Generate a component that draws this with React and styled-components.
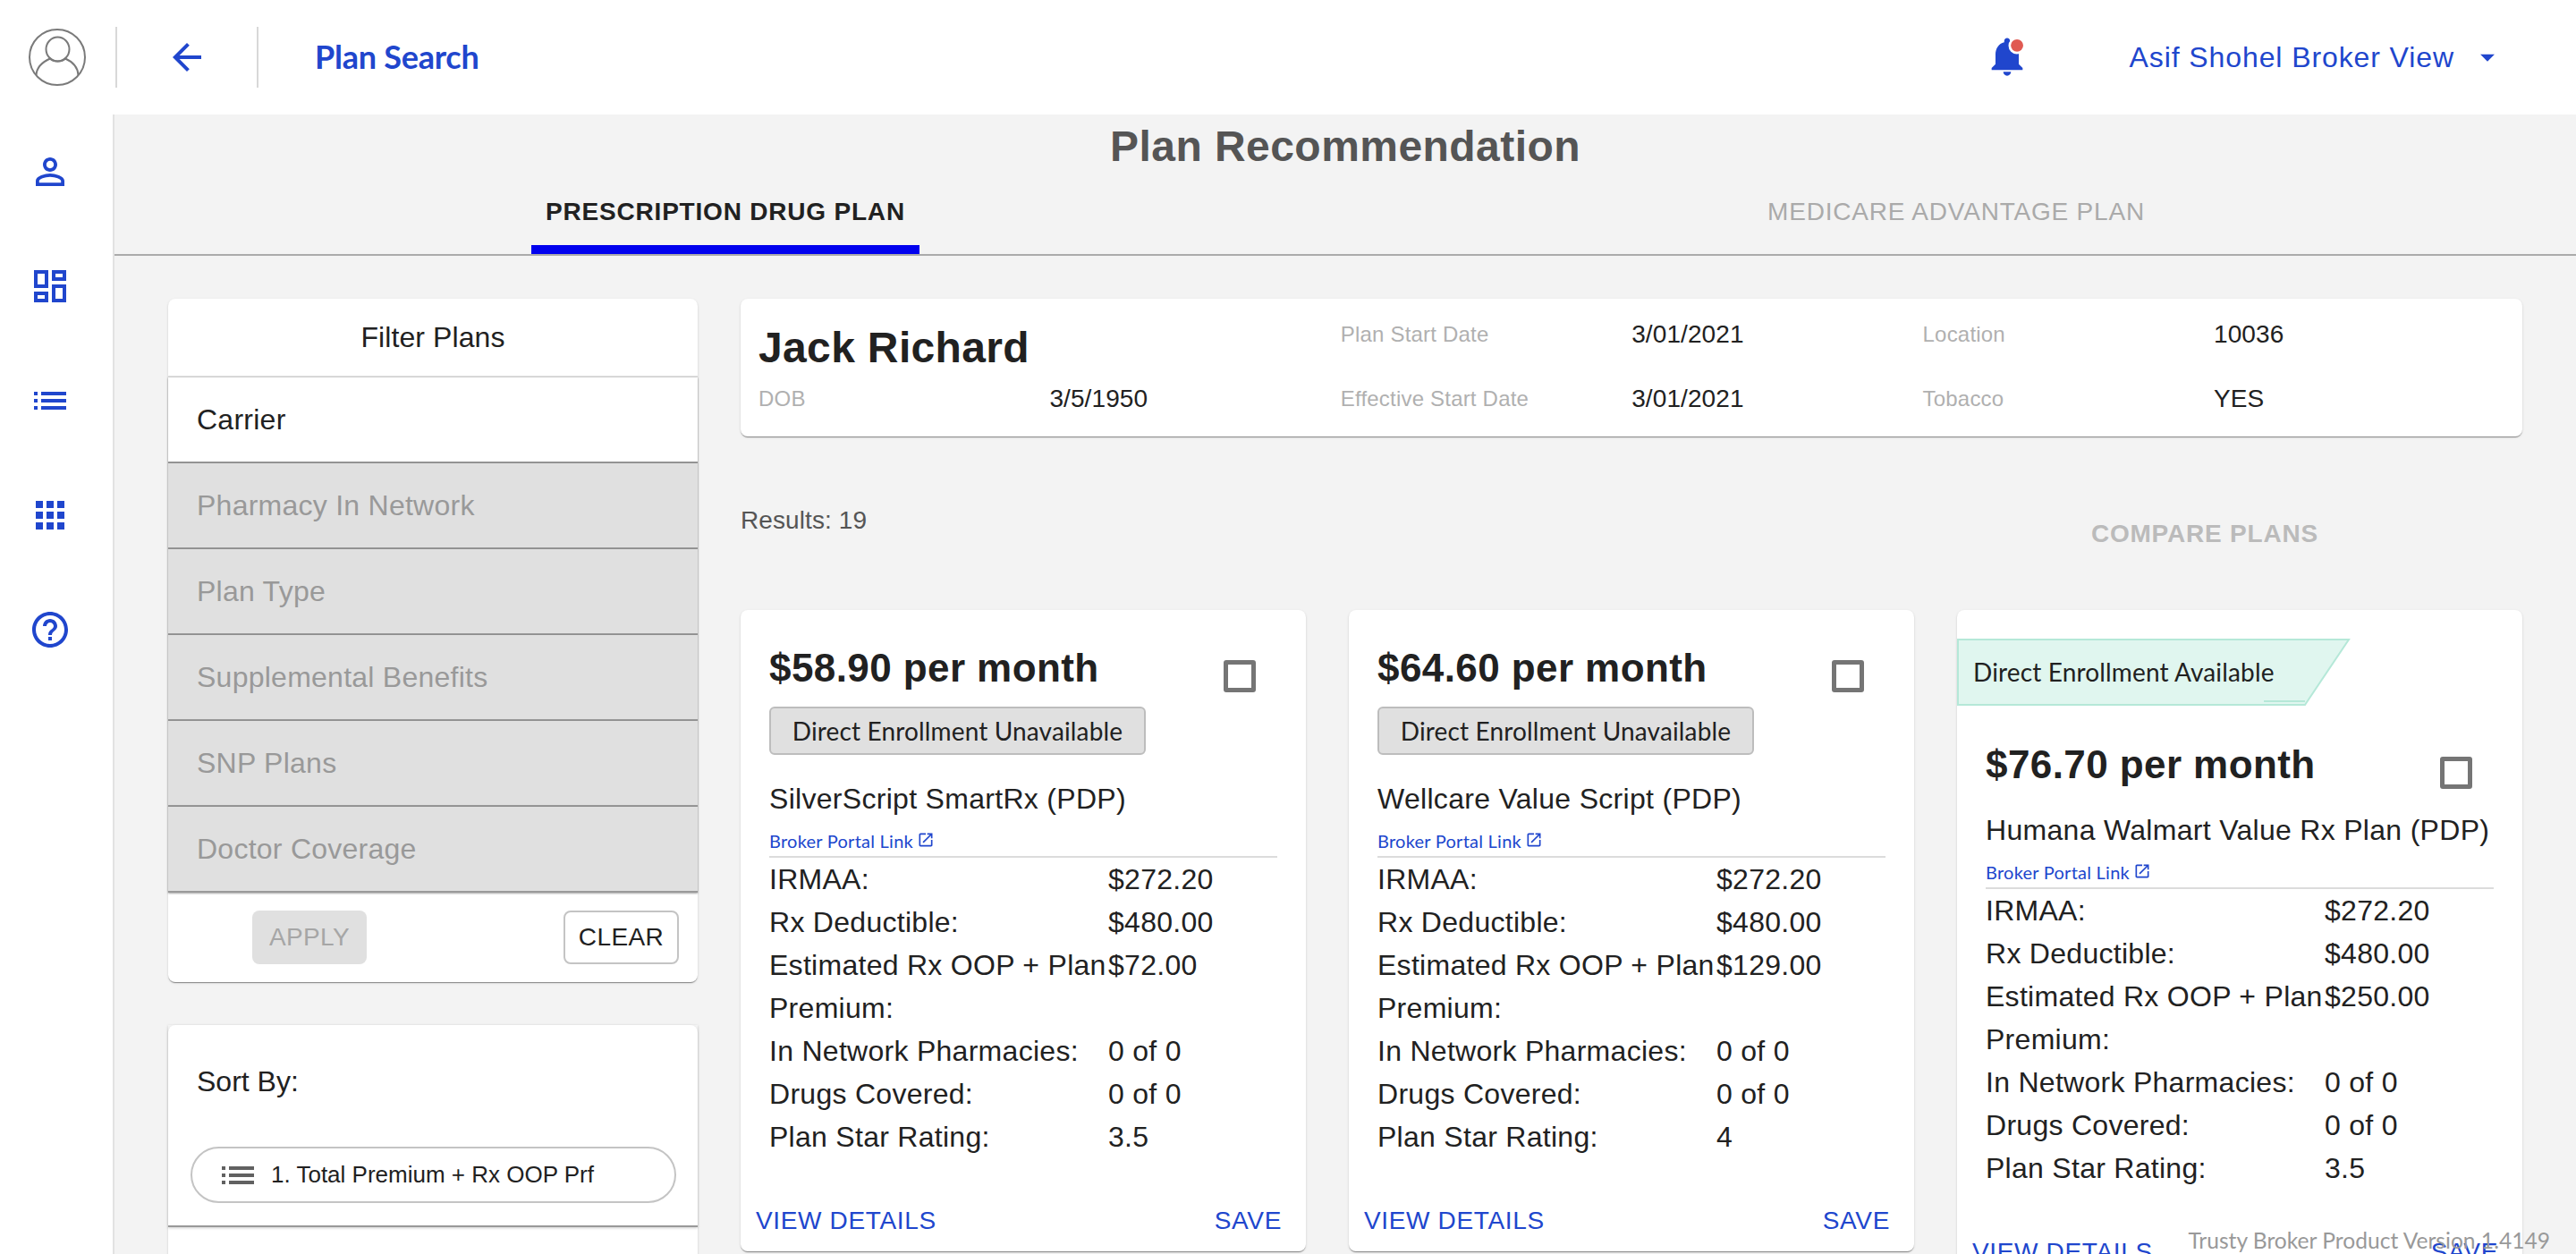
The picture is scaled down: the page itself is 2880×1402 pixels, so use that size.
import React from "react";
import styled, { createGlobalStyle } from "styled-components";

const BLUE = "#2046cd";
const SANS = `"Liberation Sans", Arial, sans-serif`;
const LATO = `Lato, "Liberation Sans", sans-serif`;

const Global = createGlobalStyle`
  html, body { margin: 0; padding: 0; height: 100%; overflow: hidden; background: #fff; }
  * { box-sizing: border-box; }
  #root { height: 100%; }
`;

const Page = styled.div`
  position: relative;
  height: 1402px;
  overflow: hidden;
  display: grid;
  grid-template-rows: 128px 1fr;
  grid-template-columns: 128px 1fr;
  font-family: ${SANS};
  color: #212121;
`;

const TopBar = styled.header`
  grid-column: 1 / 3;
  display: flex;
  align-items: center;
  background: #fff;
  padding-left: 32px;
`;

const Avatar = styled.svg`
  width: 64px;
  height: 64px;
  flex: none;
`;

const VRule = styled.div`
  width: 2px;
  height: 68px;
  background: #d8d8d8;
  flex: none;
  margin-left: ${(p) => p.$left}px;
`;

const BackIcon = styled.svg`
  width: 48px;
  height: 48px;
  margin-left: 54px;
  flex: none;
  fill: ${BLUE};
`;

const PageName = styled.div`
  font-family: ${LATO};
  font-weight: 700;
  font-size: 36px;
  line-height: 44px;
  margin-top: -3px;
  color: ${BLUE};
  margin-left: 63px;
  letter-spacing: -0.25px;
`;

const TopRight = styled.div`
  margin-left: auto;
  display: flex;
  align-items: center;
  padding-right: 80px;
`;

const Bell = styled.svg`
  width: 52px;
  height: 52px;
  flex: none;
  margin-right: 111px;
  margin-top: -2px;
`;

const UserName = styled.div`
  font-size: 32px;
  color: ${BLUE};
  letter-spacing: 0.9px;
  white-space: nowrap;
`;

const Caret = styled.svg`
  width: 38px;
  height: 38px;
  fill: ${BLUE};
  margin-left: 18px;
  flex: none;
`;

const Side = styled.nav`
  background: #fff;
  border-right: 2px solid #e2e2e2;
  display: flex;
  flex-direction: column;
  align-items: center;
  padding: 40px 14px 0 0;
  gap: 80px;
`;

const SideIcon = styled.svg`
  width: 48px;
  height: 48px;
  fill: ${BLUE};
  flex: none;
`;

const Main = styled.main`
  background: #f3f3f3;
  overflow: hidden;
  min-width: 0;
`;

const Heading = styled.div`
  border-bottom: 2px solid #aaa;
  height: 158px;
  display: flex;
  flex-direction: column;
`;

const Title = styled.h1`
  margin: 0;
  text-align: center;
  font-size: 48px;
  line-height: 56px;
  padding-top: 8px;
  font-weight: 700;
  color: #555;
  height: 62px;
  letter-spacing: 0.45px;
`;

const Tabs = styled.div`
  display: grid;
  grid-template-columns: 1366px 1fr;
  justify-items: center;
  flex: 1;
  align-items: end;
`;

const Tab = styled.div`
  width: 434px;
  height: 94px;
  padding-top: 26px;
  line-height: 42px;
  text-align: center;
  font-size: 28px;
  letter-spacing: 0.8px;
  white-space: nowrap;
  font-weight: ${(p) => (p.$active ? 700 : 400)};
  color: ${(p) => (p.$active ? "#212121" : "#aaa")};
  border-bottom: 10px solid ${(p) => (p.$active ? "#0000ee" : "transparent")};
`;

const Content = styled.div`
  display: grid;
  grid-template-columns: 592px 1992px;
  column-gap: 48px;
  padding: 48px 0 0 60px;
  align-items: start;
`;

const FilterColumn = styled.aside`
  display: flex;
  flex-direction: column;
  gap: 48px;
`;

const Panel = styled.section`
  background: #fff;
  border-radius: 8px;
  box-shadow: 0 2px 1px -1px rgba(0, 0, 0, 0.3), 0 1px 1px rgba(0, 0, 0, 0.14), 0 1px 3px rgba(0, 0, 0, 0.12);
`;

const FilterHead = styled.div`
  height: 88px;
  border-bottom: 2px solid #e0e0e0;
  text-align: center;
  line-height: 86px;
  font-size: 32px;
  letter-spacing: 0.1px;
`;

const FilterRow = styled.div`
  height: 96px;
  padding: 0 32px;
  line-height: 94px;
  font-size: 32px;
  letter-spacing: 0.25px;
  background: ${(p) => (p.$on ? "#fff" : "#e0e0e0")};
  color: ${(p) => (p.$on ? "#212121" : "#999")};
  border-bottom: 2px solid #9a9a9a;
  box-shadow: 0 1px 2px rgba(0, 0, 0, 0.3), 0 0 2px rgba(0, 0, 0, 0.15);
`;

const FilterActions = styled.div`
  display: flex;
  justify-content: space-between;
  padding: 20px 21px 20px 94px;
`;

const ApplyButton = styled.div`
  width: 128px;
  height: 60px;
  border-radius: 8px;
  background: #e0e0e0;
  color: #a6a6a6;
  font-size: 28px;
  line-height: 60px;
  text-align: center;
  letter-spacing: 0.4px;
`;

const ClearButton = styled.div`
  width: 129px;
  height: 60px;
  border-radius: 8px;
  border: 2px solid #c4c4c4;
  font-size: 28px;
  line-height: 56px;
  text-align: center;
  letter-spacing: 0.4px;
`;

const SortTop = styled.div`
  padding: 38px 24px 25px 25px;
  border-bottom: 2px solid #999;
  box-shadow: 0 1px 3px rgba(0, 0, 0, 0.2);
`;

const SortLabel = styled.div`
  font-size: 32px;
  line-height: 50px;
  padding-left: 7px;
`;

const SortPill = styled.div`
  margin-top: 48px;
  height: 63px;
  border: 2px solid #c4c4c4;
  border-radius: 32px;
  display: flex;
  align-items: center;
  padding-left: 27px;
  font-size: 26px;
  gap: 13px;
`;

const SortIcon = styled.svg`
  width: 48px;
  height: 48px;
  fill: #616161;
  flex: none;
`;

const SortRest = styled.div`
  height: 120px;
`;

const Results = styled.div`
  min-width: 0;
`;

const PersonCard = styled(Panel)`
  display: grid;
  grid-template-columns: repeat(6, 325.4px);
  grid-auto-rows: 72px;
  padding: 4px 20px 6px;
  height: 154px;
`;

const PersonName = styled.div`
  grid-column: span 2;
  font-size: 48px;
  font-weight: 700;
  line-height: 42px;
  padding-top: 30px;
  letter-spacing: 0.35px;
`;

const InfoLabel = styled.div`
  font-size: 24px;
  line-height: 72px;
  color: #b0b0b0;
  letter-spacing: 0.2px;
`;

const InfoValue = styled.div`
  font-size: 28px;
  line-height: 72px;
  letter-spacing: 0.1px;
`;

const ToolRow = styled.div`
  height: 194px;
  display: flex;
  justify-content: space-between;
  align-items: flex-start;
`;

const ResultCount = styled.div`
  font-size: 28px;
  line-height: 40px;
  margin-top: 74px;
  color: #555;
  letter-spacing: 0.1px;
`;

const CompareLink = styled.div`
  font-size: 28px;
  line-height: 40px;
  margin-top: 89px;
  margin-right: 228px;
  font-weight: 700;
  color: #bbb;
  letter-spacing: 0.8px;
`;

const CardRow = styled.div`
  display: grid;
  grid-template-columns: repeat(3, 632px);
  gap: 48px;
  align-items: start;
`;

const Card = styled(Panel)`
  display: flex;
  flex-direction: column;
  padding-top: ${(p) => (p.$ribbon ? 32 : 36)}px;
`;

const Ribbon = styled.svg`
  display: block;
  width: 440px;
  height: 75px;
  margin-bottom: 37px;
`;

const RibbonWrap = styled.div`
  position: relative;
`;

const RibbonText = styled.span`
  position: absolute;
  left: 18px;
  top: 0;
  line-height: 75px;
  font-family: ${LATO};
  font-size: 28px;
  letter-spacing: 0.15px;
  color: #212121;
`;

const CardBody = styled.div`
  padding: 0 32px;
`;

const PriceRow = styled.div`
  display: flex;
  justify-content: space-between;
  align-items: flex-start;
`;

const Price = styled.div`
  font-size: 44px;
  line-height: 58px;
  font-weight: 700;
  white-space: nowrap;
  letter-spacing: 0.42px;
`;

const Check = styled.div`
  width: 36px;
  height: 36px;
  border: 5px solid #757575;
  border-radius: 3px;
  margin: 20px 24px 0 0;
  flex: none;
`;

const UnavailableBadge = styled.div`
  display: inline-block;
  margin-top: 14px;
  width: 421px;
  height: 54px;
  line-height: 50px;
  text-align: center;
  background: #e0e0e0;
  border: 2px solid #bdbdbd;
  border-radius: 6px;
  font-family: ${LATO};
  font-size: 28px;
  letter-spacing: 0.15px;
`;

const PlanName = styled.div`
  margin-top: ${(p) => (p.$tight ? 20 : 25)}px;
  font-size: 32px;
  line-height: 48px;
  letter-spacing: 0.3px;
  white-space: nowrap;
`;

const PortalLink = styled.div`
  margin-top: 6px;
  height: 36px;
  border-bottom: 2px solid #dcdcdc;
  display: flex;
  align-items: flex-start;
  font-family: ${LATO};
  font-size: 20px;
  line-height: 34px;
  letter-spacing: 0.25px;
  color: ${BLUE};
  gap: 4px;
`;

const LinkIcon = styled.svg`
  width: 20px;
  height: 20px;
  fill: ${BLUE};
  margin-top: 6px;
`;

const Facts = styled.dl`
  margin: 0;
  display: grid;
  grid-template-columns: 379px 1fr;
  font-size: 32px;
  line-height: 48px;
  letter-spacing: 0.28px;
`;

const FactLabel = styled.dt`
  margin: 0;
`;

const FactValue = styled.dd`
  margin: 0;
`;

const CardActions = styled.div`
  display: flex;
  justify-content: space-between;
  margin-top: 46px;
  padding: 0 27px 10px 17px;
`;

const ActionLink = styled.div`
  font-size: 28px;
  line-height: 48px;
  color: ${BLUE};
  letter-spacing: 0.65px;
`;

const Version = styled.div`
  position: absolute;
  right: 29px;
  bottom: 1px;
  line-height: 28px;
  font-family: ${LATO};
  font-size: 24.6px;
  color: #999;
  white-space: nowrap;
`;

const P = {
  person: "M12 5.9c1.16 0 2.1.94 2.1 2.1s-.94 2.1-2.1 2.1S9.9 9.16 9.9 8s.94-2.1 2.1-2.1m0 9c2.97 0 6.1 1.46 6.1 2.1v1.1H5.9V17c0-.64 3.13-2.1 6.1-2.1M12 4C9.79 4 8 5.79 8 8s1.79 4 4 4 4-1.79 4-4-1.79-4-4-4zm0 9c-2.67 0-8 1.34-8 4v3h16v-3c0-2.66-5.33-4-8-4z",
  dash: "M19 5v2h-4V5h4M9 5v6H5V5h4m10 8v6h-4v-6h4M9 17v2H5v-2h4M21 3h-8v6h8V3zM11 3H3v10h8V3zm10 8h-8v10h8V11zm-10 4H3v6h8v-6z",
  list: "M3 13h2v-2H3v2zm0 4h2v-2H3v2zm0-8h2V7H3v2zm4 4h14v-2H7v2zm0 4h14v-2H7v2zM7 7v2h14V7H7z",
  apps: "M4 8h4V4H4v4zm6 12h4v-4h-4v4zm-6 0h4v-4H4v4zm0-6h4v-4H4v4zm6 0h4v-4h-4v4zm6-10v4h4V4h-4zm-6 4h4V4h-4v4zm6 6h4v-4h-4v4zm0 6h4v-4h-4v4z",
  help: "M11 18h2v-2h-2v2zm1-16C6.48 2 2 6.48 2 12s4.48 10 10 10 10-4.48 10-10S17.52 2 12 2zm0 18c-4.41 0-8-3.59-8-8s3.59-8 8-8 8 3.59 8 8-3.59 8-8 8zm0-14c-2.21 0-4 1.79-4 4h2c0-1.1.9-2 2-2s2 .9 2 2c0 2-3 1.75-3 5h2c0-2.25 3-2.5 3-5 0-2.21-1.79-4-4-4z",
  back: "M20 11H7.83l5.59-5.59L12 4l-8 8 8 8 1.41-1.41L7.83 13H20v-2z",
  bell: "M12 22c1.1 0 2-.9 2-2h-4c0 1.1.89 2 2 2zm6-6v-5c0-3.07-1.64-5.64-4.5-6.32V4c0-.83-.67-1.5-1.5-1.5s-1.5.67-1.5 1.5v.68C7.63 5.36 6 7.92 6 11v5l-2 2v1h16v-1l-2-2z",
  drop: "M7 10l5 5 5-5z",
  open: "M19 19H5V5h7V3H5c-1.11 0-2 .9-2 2v14c0 1.1.89 2 2 2h14c1.1 0 2-.9 2-2v-7h-2v7zM14 3v2h3.59l-9.83 9.83 1.41 1.41L19 6.41V10h2V3h-7z",
};

const plans = [
  { price: "$58.90 per month", name: "SilverScript SmartRx (PDP)", oop: "$72.00", star: "3.5" },
  { price: "$64.60 per month", name: "Wellcare Value Script (PDP)", oop: "$129.00", star: "4" },
  { price: "$76.70 per month", name: "Humana Walmart Value Rx Plan (PDP)", oop: "$250.00", star: "3.5", direct: true },
];

const filters = ["Pharmacy In Network", "Plan Type", "Supplemental Benefits", "SNP Plans", "Doctor Coverage"];

function PlanCard({ plan }) {
  const facts = [
    ["IRMAA:", "$272.20"],
    ["Rx Deductible:", "$480.00"],
    ["Estimated Rx OOP + Plan Premium:", plan.oop],
    ["In Network Pharmacies:", "0 of 0"],
    ["Drugs Covered:", "0 of 0"],
    ["Plan Star Rating:", plan.star],
  ];
  return (
    <Card $ribbon={plan.direct}>
      {plan.direct && (
        <RibbonWrap>
          <Ribbon viewBox="0 0 440 75">
            <path d="M1 1H438L389 74H1Z" fill="#e0f6ef" stroke="#b5e8d8" strokeWidth="2" />
            <path d="M343 70H389" fill="none" stroke="#b5e8d8" strokeWidth="2" />
          </Ribbon>
          <RibbonText>Direct Enrollment Available</RibbonText>
        </RibbonWrap>
      )}
      <CardBody>
        <PriceRow>
          <Price>{plan.price}</Price>
          <Check />
        </PriceRow>
        {!plan.direct && <UnavailableBadge>Direct Enrollment Unavailable</UnavailableBadge>}
        <PlanName $tight={plan.direct}>{plan.name}</PlanName>
        <PortalLink>
          Broker Portal Link
          <LinkIcon viewBox="0 0 24 24"><path d={P.open} /></LinkIcon>
        </PortalLink>
        <Facts>
          {facts.map(([k, v]) => (
            <React.Fragment key={k}>
              <FactLabel>{k}</FactLabel>
              <FactValue>{v}</FactValue>
            </React.Fragment>
          ))}
        </Facts>
      </CardBody>
      <CardActions>
        <ActionLink>VIEW DETAILS</ActionLink>
        <ActionLink>SAVE</ActionLink>
      </CardActions>
    </Card>
  );
}

export default function App() {
  return (
    <>
      <Global />
      <Page>
        <TopBar>
          <Avatar viewBox="0 0 64 64" fill="none" stroke="#7a7a7a" strokeWidth="2">
            <circle cx="32" cy="32" r="31" />
            <ellipse cx="32.5" cy="23" rx="13" ry="13.5" />
            <path d="M8.5 52C9 43 16 37 24 33.5C28 37.5 37 37.5 41 33.5C49 37 55 43 55.5 52" />
          </Avatar>
          <VRule $left={33} />
          <BackIcon viewBox="0 0 24 24"><path d={P.back} /></BackIcon>
          <VRule $left={54} />
          <PageName>Plan Search</PageName>
          <TopRight>
            <Bell viewBox="0 0 24 24">
              <path d={P.bell} fill={BLUE} />
              <circle cx="17" cy="6.5" r="4.3" fill="#fff" />
              <circle cx="17.1" cy="6.4" r="3.2" fill="#e05a52" />
            </Bell>
            <UserName>Asif Shohel Broker View</UserName>
            <Caret viewBox="0 0 24 24"><path d={P.drop} /></Caret>
          </TopRight>
        </TopBar>
        <Side>
          {[P.person, P.dash, P.list, P.apps, P.help].map((d) => (
            <SideIcon key={d} viewBox="0 0 24 24"><path d={d} /></SideIcon>
          ))}
        </Side>
        <Main>
          <Heading>
            <Title>Plan Recommendation</Title>
            <Tabs>
              <Tab $active>PRESCRIPTION DRUG PLAN</Tab>
              <Tab>MEDICARE ADVANTAGE PLAN</Tab>
            </Tabs>
          </Heading>
          <Content>
            <FilterColumn>
              <Panel>
                <FilterHead>Filter Plans</FilterHead>
                <FilterRow $on>Carrier</FilterRow>
                {filters.map((f) => <FilterRow key={f}>{f}</FilterRow>)}
                <FilterActions>
                  <ApplyButton>APPLY</ApplyButton>
                  <ClearButton>CLEAR</ClearButton>
                </FilterActions>
              </Panel>
              <Panel>
                <SortTop>
                  <SortLabel>Sort By:</SortLabel>
                  <SortPill>
                    <SortIcon viewBox="0 0 24 24"><path d={P.list} /></SortIcon>
                    1. Total Premium + Rx OOP Prf
                  </SortPill>
                </SortTop>
                <SortRest />
              </Panel>
            </FilterColumn>
            <Results>
              <PersonCard>
                <PersonName>Jack Richard</PersonName>
                <InfoLabel>Plan Start Date</InfoLabel>
                <InfoValue>3/01/2021</InfoValue>
                <InfoLabel>Location</InfoLabel>
                <InfoValue>10036</InfoValue>
                <InfoLabel>DOB</InfoLabel>
                <InfoValue>3/5/1950</InfoValue>
                <InfoLabel>Effective Start Date</InfoLabel>
                <InfoValue>3/01/2021</InfoValue>
                <InfoLabel>Tobacco</InfoLabel>
                <InfoValue>YES</InfoValue>
              </PersonCard>
              <ToolRow>
                <ResultCount>Results: 19</ResultCount>
                <CompareLink>COMPARE PLANS</CompareLink>
              </ToolRow>
              <CardRow>
                {plans.map((p) => <PlanCard key={p.name} plan={p} />)}
              </CardRow>
            </Results>
          </Content>
        </Main>
        <Version>Trusty Broker Product Version 1.4149</Version>
      </Page>
    </>
  );
}
